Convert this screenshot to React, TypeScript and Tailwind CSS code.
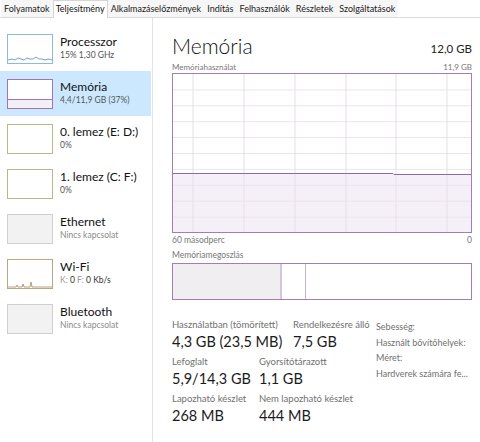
import type { ReactNode } from "react";

const tabs = [
  "Folyamatok",
  "Teljesítmény",
  "Alkalmazáselőzmények",
  "Indítás",
  "Felhasználók",
  "Részletek",
  "Szolgáltatások",
];

type Item = {
  title: string;
  sub: ReactNode;
  thumb: ReactNode;
  selected?: boolean;
};

function CpuThumb() {
  return (
    <div className="w-[46px] h-[30px] border border-[#8fb9d6] bg-white">
      <svg viewBox="0 0 44 28" className="w-full h-full" preserveAspectRatio="none">
        <polyline
          points="0,25 4,24 7,25 10,23 13,24 16,25 19,23 22,24 25,24 28,22 31,24 34,24 37,25 40,24 44,25"
          fill="none"
          stroke="#4c8ec4"
          strokeWidth="0.8"
        />
      </svg>
    </div>
  );
}

function MemThumb() {
  return (
    <div className="w-[46px] h-[30px] border border-[#a274b0] bg-white flex flex-col">
      <div className="h-[19px]" />
      <div className="flex-1 border-t border-[#a274b0] bg-[#f4eef6]" />
    </div>
  );
}

function DiskThumb() {
  return <div className="w-[46px] h-[30px] border border-[#b3bb8c] bg-white" />;
}

function GrayThumb() {
  return <div className="w-[46px] h-[30px] border border-[#cfcfcf] bg-[#f2f2f2]" />;
}

function WifiThumb() {
  return (
    <div className="w-[46px] h-[30px] border border-[#bca57f] bg-white">
      <svg viewBox="0 0 44 28" className="w-full h-full" preserveAspectRatio="none">
        <polyline
          points="0,27 8,27 9,25 10,27 14,27 15,24 16,27 22,27 23,22 24,27 44,27"
          fill="none"
          stroke="#a8885a"
          strokeWidth="0.8"
        />
      </svg>
    </div>
  );
}

const items: Item[] = [
  { title: "Processzor", sub: "15% 1,30 GHz", thumb: <CpuThumb /> },
  {
    title: "Memória",
    sub: "4,4/11,9 GB (37%)",
    thumb: <MemThumb />,
    selected: true,
  },
  { title: "0. lemez (E: D:)", sub: "0%", thumb: <DiskThumb /> },
  { title: "1. lemez (C: F:)", sub: "0%", thumb: <DiskThumb /> },
  {
    title: "Ethernet",
    sub: <span className="text-[#8a8a8a]">Nincs kapcsolat</span>,
    thumb: <GrayThumb />,
  },
  {
    title: "Wi-Fi",
    sub: (
      <span>
        <span className="text-[#9a9a9a]">K: </span>
        <span className="text-[#333]">0 </span>
        <span className="text-[#9a9a9a]">F: </span>
        <span className="text-[#333]">0 Kb/s</span>
      </span>
    ),
    thumb: <WifiThumb />,
  },
  {
    title: "Bluetooth",
    sub: <span className="text-[#8a8a8a]">Nincs kapcsolat</span>,
    thumb: <GrayThumb />,
  },
];

function UsageChart() {
  const vLines = [20, 71, 122, 173, 223, 274];
  const hLines = [1, 2, 3, 4, 5, 6, 7, 8, 9].map((i) => i * 15.9);
  return (
    <div className="h-[160px] border border-[#a47db2] bg-white">
      <svg viewBox="0 0 298 158" className="w-full h-full block" preserveAspectRatio="none">
        <path d="M0,99.5 L220,99.5 L220,100.5 L298,100.5 L298,158 L0,158 Z" fill="#f5f0f7" />
        {hLines.map((y) => (
          <line key={y} x1="0" x2="298" y1={y} y2={y} stroke="#ebe3ee" strokeWidth="1" />
        ))}
        {vLines.map((x) => (
          <line key={x} x1={x} x2={x} y1="0" y2="158" stroke="#e6dde9" strokeWidth="1" />
        ))}
        <path d="M0,99.5 L220,99.5 L221,100.5 L298,100.5" fill="none" stroke="#8f6a9c" strokeWidth="1" />
      </svg>
    </div>
  );
}

function CompositionBar() {
  return (
    <div className="h-[37px] border border-[#a47db2] bg-white flex">
      <div className="w-[109px] bg-[#f1eef2] border-r-2 border-[#d3c6d8]" />
      <div className="w-[24px] border-r border-[#c6b3cc]" />
      <div className="flex-1" />
    </div>
  );
}

function Stat({ label, value, width }: { label: string; value: string; width: string }) {
  return (
    <div className={width + " whitespace-nowrap"}>
      <div className="text-[9.5px] leading-[12px] text-[#707070]">{label}</div>
      <div className="text-[14.5px] leading-[22px] text-[#1b1b1b]">{value}</div>
    </div>
  );
}

export default function App() {
  return (
    <div
      className="w-[480px] h-[442px] bg-white flex flex-col overflow-hidden"
      style={{ fontFamily: 'Lato, "Noto Sans", Arial, sans-serif' }}
    >
      <div className="h-[18px] flex items-end border-b border-[#dadada] pl-[1px]">
        {tabs.map((t) => (
          <div
            key={t}
            className={
              t === "Teljesítmény"
                ? "h-[18px] px-[2px] bg-white border border-b-0 border-[#d6d6d6] text-[9px] leading-[15px] text-[#111] -mb-[1px] whitespace-nowrap"
                : "h-[17px] px-[3px] bg-[#f6f6f6] text-[9px] leading-[17px] text-[#222] whitespace-nowrap"
            }
          >
            {t}
          </div>
        ))}
      </div>

      <div className="flex flex-1">
        <div className="w-[153px] border-r border-[#e3e3e3] pt-[8px] flex flex-col">
          {items.map((it) => (
            <div
              key={it.title}
              className={
                it.selected
                  ? "h-[45px] w-[151px] flex items-center pl-[7px] bg-[#cce8ff]"
                  : "h-[45px] w-[151px] flex items-center pl-[7px]"
              }
            >
              {it.thumb}
              <div className="ml-[7px] flex flex-col -mt-[3px] whitespace-nowrap">
                <span className="text-[12px] leading-[15px] text-[#111]">{it.title}</span>
                <span className="text-[8.5px] leading-[12px] text-[#555]">{it.sub}</span>
              </div>
            </div>
          ))}
        </div>

        <div className="flex-1 pl-[19px] pr-[8px] pt-[10px] flex flex-col">
          <div className="h-[32px] flex items-end justify-between">
            <span className="text-[21px] leading-[28px] font-light text-[#111]">Memória</span>
            <span className="text-[11.5px] leading-[22px] text-[#222]">12,0 GB</span>
          </div>
          <div className="h-[13px] flex justify-between items-center text-[8px] text-[#777]">
            <span>Memóriahasználat</span>
            <span>11,9 GB</span>
          </div>
          <UsageChart />
          <div className="h-[15px] flex justify-between items-center text-[8.5px] text-[#777]">
            <span>60 másodperc</span>
            <span>0</span>
          </div>
          <div className="h-[15px] flex items-center text-[8.5px] text-[#777]">
            Memóriamegoszlás
          </div>
          <CompositionBar />

          <div className="flex mt-[19px]">
            <div className="w-[204px] flex flex-col gap-[3px]">
              <div className="flex">
                <Stat label="Használatban (tömörített)" value="4,3 GB (23,5 MB)" width="w-[121px]" />
                <Stat label="Rendelkezésre álló" value="7,5 GB" width="w-[83px]" />
              </div>
              <div className="flex">
                <Stat label="Lefoglalt" value="5,9/14,3 GB" width="w-[87px]" />
                <Stat label="Gyorsítótárazott" value="1,1 GB" width="w-[100px]" />
              </div>
              <div className="flex">
                <Stat label="Lapozható készlet" value="268 MB" width="w-[87px]" />
                <Stat label="Nem lapozható készlet" value="444 MB" width="w-[110px]" />
              </div>
            </div>
            <div className="flex flex-col text-[9px] leading-[15.5px] text-[#707070] whitespace-nowrap">
              <span>Sebesség:</span>
              <span>Használt bővítőhelyek:</span>
              <span>Méret:</span>
              <span>Hardverek számára fe...</span>
            </div>
          </div>
        </div>
      </div>
    </div>
  );
}
